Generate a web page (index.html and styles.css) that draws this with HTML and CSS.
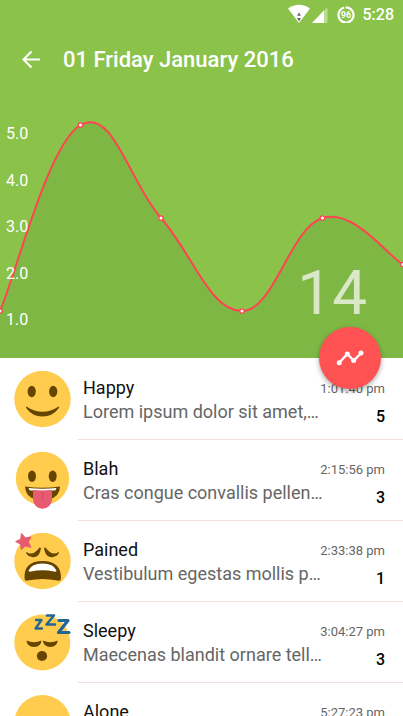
FILE: index.html
```html
<!DOCTYPE html>
<html lang="en">
<head>
<meta charset="utf-8">
<meta name="viewport" content="width=device-width, initial-scale=1">
<title>01 Friday January 2016</title>
<link rel="stylesheet" href="styles.css">
</head>
<body>
<div class="app">
  <header class="hero">
    <div class="status">
      <svg class="status-icons" width="68" height="20" viewBox="0 0 68 20" aria-hidden="true">
        <path d="M0 5.500Q11-2 22 5.500L11 20z" fill="#fff"/>
        <path d="M9 12.800L11 9.500l2 3.300zM9 15h4L11 18.500z" fill="#686868"/>
        <path d="M39.500 4v16H24z" fill="#fff" opacity=".4"/>
        <path d="M36 7.500V20H24z" fill="#fff"/>
        <circle cx="58" cy="12" r="7.600" fill="none" stroke="#fff" stroke-width="2.200" stroke-dasharray="46 1.800" transform="rotate(-93 58 12)"/>
        <text class="battery" x="58" y="15" text-anchor="middle">96</text>
      </svg>
      <time class="clock">5:28</time>
    </div>
    <div class="bar">
      <button class="back" type="button" aria-label="Back">
        <svg width="20" height="20" viewBox="0 0 20 20" aria-hidden="true"><path d="M10.500 1.500L2.500 9.500l8 8M2.500 9.500H19" fill="none" stroke="#fff" stroke-width="2.100"/></svg>
      </button>
      <h1 class="title">01 Friday January 2016</h1>
    </div>
    <div class="chart">
      <svg class="plot" viewBox="0 90 403 268" aria-hidden="true">
        <path d="M0 311C16.100 273.800 48.300 143.600 80.500 125S128.700 180.800 161 218S209.700 311 242 311S290.300 227.300 322.500 218S386.900 255.200 403 264.500V358H0z" fill="#7fb744"/>
        <path d="M0 311C16.100 273.800 48.300 143.600 80.500 125S128.700 180.800 161 218S209.700 311 242 311S290.300 227.300 322.500 218S386.900 255.200 403 264.500" fill="none" stroke="#ff4351" stroke-width="2"/>
        <g fill="#fff" stroke="#ff4351" stroke-width="1.300">
          <circle cx="0" cy="311" r="2.200"/><circle cx="80.500" cy="125" r="2.200"/><circle cx="161" cy="218" r="2.200"/><circle cx="242" cy="311" r="2.200"/><circle cx="322.500" cy="218" r="2.200"/><circle cx="403" cy="264.500" r="2.200"/>
        </g>
      </svg>
      <div class="scale"><span>5.0</span><span>4.0</span><span>3.0</span><span>2.0</span><span>1.0</span></div>
      <div class="total">14</div>
    </div>
    <button class="fab" type="button" aria-label="Show trend">
      <svg width="30" height="18" viewBox="0 0 30 18" aria-hidden="true">
        <path d="M4 14L12.300 5L18.700 11.500L26.300 4" fill="none" stroke="#fff" stroke-width="2.400"/>
        <g fill="#fff"><circle cx="4.200" cy="13.800" r="2.500"/><circle cx="12.300" cy="5" r="2.500"/><circle cx="18.700" cy="11.600" r="2.500"/><circle cx="26" cy="4" r="2.500"/></g>
      </svg>
    </button>
  </header>
  <ul class="list">
    <li class="row">
      <svg class="face" viewBox="0 0 57 57" aria-hidden="true">
        <circle cx="28.500" cy="28" r="28.200" fill="#ffcc4d"/>
        <g fill="#664500"><ellipse cx="17.700" cy="20.500" rx="4.100" ry="5.700"/><ellipse cx="39.200" cy="20.500" rx="4.100" ry="5.700"/>
        <path d="M12.300 35.500Q28.500 46 44.700 35.500Q45.500 36 44.500 37.500Q38.500 45.500 28.500 45.500T12.500 37.500Q11.500 36 12.300 35.500z"/></g>
      </svg>
      <div class="body"><div class="text"><h2 class="name">Happy</h2><p class="note">Lorem ipsum dolor sit amet,…</p></div>
      <div class="meta"><time class="time">1:01:40 pm</time><span class="count">5</span></div></div>
    </li>
    <li class="row">
      <svg class="face" viewBox="0 0 57 57" aria-hidden="true">
        <circle cx="28.500" cy="26.500" r="26.700" fill="#ffcc4d"/>
        <g fill="#664500"><ellipse cx="18" cy="24.200" rx="4" ry="5.700"/><ellipse cx="38.700" cy="24.200" rx="4" ry="5.700"/>
        <path d="M11 34.500Q28.500 37 46 34.500Q45.500 45.500 35 47H22Q11.500 45.500 11 34.500z"/></g>
        <path d="M14.500 36Q28.500 37.500 42.500 36L41.500 38.300Q28.500 40 15.500 38.300z" fill="#fff"/>
        <path d="M19 38Q28.500 38.800 38 38V47.500A9.500 9.200 0 0 1 19 47.500z" fill="#e75a70"/>
        <path d="M28.500 39V48.500" stroke="#d94b67" stroke-width="1"/>
      </svg>
      <div class="body"><div class="text"><h2 class="name">Blah</h2><p class="note">Cras congue convallis pellen…</p></div>
      <div class="meta"><time class="time">2:15:56 pm</time><span class="count">3</span></div></div>
    </li>
    <li class="row">
      <svg class="face" viewBox="0 0 57 57" aria-hidden="true">
        <circle cx="28.500" cy="28" r="28.200" fill="#ffcc4d"/>
        <path d="M12.500 19Q19 23.500 25.500 14.500L27 15Q25.500 25.500 18 24Q13 23 12 19.500zM44.500 19Q38 23.500 31.500 14.500L30 15Q31.500 25.500 39 24Q44 23 45 19.500z" fill="#664500"/>
        <path d="M10.500 45Q10 28 28.500 28T47 45Q47 48.500 43.500 47.500Q28.500 44.500 13.500 47.500Q10.500 48.500 10.500 45z" fill="#664500"/>
        <path d="M14.500 37.500Q17.500 30.500 28.500 30.500T42.500 37.500Q42.500 39 40 38.500Q28.500 36 17 38.500Q14.500 39 14.500 37.500z" fill="#fff"/>
        <path d="M7.500 0.500L11.500 5L17 4L14.200 9L17 14.300L11.300 13L7.300 16.500L6.700 11.200L1.700 8.500L6.700 6.200z" fill="#e75a70" stroke="#e75a70" stroke-width="1" stroke-linejoin="round"/>
      </svg>
      <div class="body"><div class="text"><h2 class="name">Pained</h2><p class="note">Vestibulum egestas mollis p…</p></div>
      <div class="meta"><time class="time">2:33:38 pm</time><span class="count">1</span></div></div>
    </li>
    <li class="row">
      <svg class="face" viewBox="0 0 57 57" aria-hidden="true">
        <circle cx="28.300" cy="28.500" r="28" fill="#ffcc4d"/>
        <path d="M12.500 26.500Q20 30 27.500 26.500Q27 33 20 33T12.500 26.500zM28.800 26.500Q36.300 30 43.800 26.500Q43 33 36.300 33T28.800 26.500z" fill="#664500"/>
        <ellipse cx="28" cy="42" rx="5.100" ry="5" fill="#664500"/>
        <g fill="none" stroke="#226699" stroke-linejoin="round" stroke-linecap="round">
          <path d="M22 6H27.500L21.500 14.500H28" stroke-width="2.300"/>
          <path d="M33 1.500H40L32.500 10.500H41" stroke-width="2.500"/>
          <path d="M45 6.500H54L44.500 18.500H55" stroke-width="3.200"/>
        </g>
      </svg>
      <div class="body"><div class="text"><h2 class="name">Sleepy</h2><p class="note">Maecenas blandit ornare tell…</p></div>
      <div class="meta"><time class="time">3:04:27 pm</time><span class="count">3</span></div></div>
    </li>
    <li class="row">
      <svg class="face" viewBox="0 0 57 57" aria-hidden="true">
        <circle cx="28.500" cy="28.200" r="28.200" fill="#ffcc4d"/>
      </svg>
      <div class="body"><div class="text"><h2 class="name">Alone</h2></div>
      <div class="meta"><time class="time">5:27:23 pm</time></div></div>
    </li>
  </ul>
</div>
</body>
</html>
```

FILE: styles.css
```css
* { box-sizing: border-box; }

body {
  margin: 0;
  background: #fff;
  font-family: Roboto, "Liberation Sans", sans-serif;
}

h1, h2, p, ul { margin: 0; padding: 0; }

.app {
  display: flex;
  flex-direction: column;
  height: 100vh;
  overflow: hidden;
}

.hero {
  position: relative;
  flex: none;
  background: #8bc34a;
  color: #fff;
}

.status {
  display: flex;
  justify-content: flex-end;
  align-items: center;
  gap: 7px;
  height: 30px;
  padding-right: 9px;
}

.status-icons { margin-bottom: 4px; }
.battery { font-size: 9px; font-weight: 700; fill: #fff; }
.clock { font-size: 16px; line-height: 20px; font-weight: 500; }

.bar {
  display: flex;
  align-items: center;
  gap: 22px;
  height: 60px;
  padding-left: 21px;
}

.back {
  display: flex;
  padding: 0;
  border: 0;
  background: none;
}

.title { font-size: 22px; line-height: 28px; font-weight: 500; white-space: nowrap; }

.chart { position: relative; }
.plot { display: block; width: 100%; height: auto; }

.scale {
  position: absolute;
  inset: 0 auto 0 6px;
  display: flex;
  flex-direction: column;
  justify-content: space-between;
  padding: 34px 0 28px;
  font-size: 16px;
  line-height: 20px;
}

.total {
  position: absolute;
  right: 36px;
  bottom: 28px;
  font-size: 62px;
  line-height: 74px;
  opacity: .7;
}

.fab {
  position: absolute;
  right: 22px;
  bottom: -31px;
  display: flex;
  align-items: center;
  justify-content: center;
  width: 62px;
  height: 62px;
  padding: 0;
  border: 0;
  border-radius: 50%;
  background: #ff5252;
  box-shadow: 0 2px 5px rgba(0, 0, 0, .35);
}

.list {
  flex: 1;
  min-height: 0;
  padding-top: 1px;
  overflow: hidden;
  list-style: none;
}

.row { display: flex; height: 81px; }

.face { flex: none; width: 57px; height: 57px; margin: 12px 7px 0 14px; }

.body {
  display: flex;
  flex: 1;
  min-width: 0;
  justify-content: space-between;
  padding: 17px 18px 0 5px;
  border-bottom: 1px solid #f2e0da;
}

.text { min-width: 0; }
.name { color: #111; font-size: 18px; line-height: 24px; font-weight: 400; }
.note { color: #666; font-size: 18px; line-height: 24px; white-space: nowrap; }

.meta {
  display: flex;
  flex-direction: column;
  align-items: flex-end;
  padding-top: 4px;
}

.time { color: #666; font-size: 13px; line-height: 18px; white-space: nowrap; }
.count { margin-top: 9px; color: #000; font-size: 16px; line-height: 20px; font-weight: 500; }
```
